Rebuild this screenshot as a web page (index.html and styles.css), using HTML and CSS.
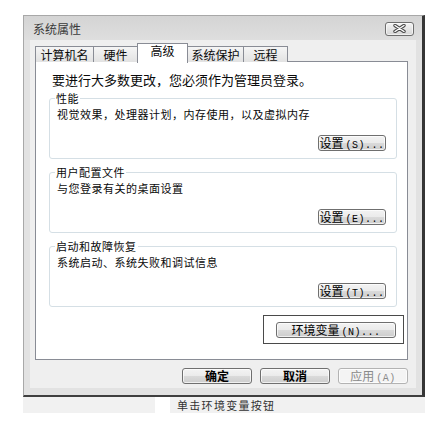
FILE: index.html
```html
<!DOCTYPE html>
<html lang="zh-CN">
<head>
    <meta charset="UTF-8"/>
    <title>系统属性</title>
    <link rel="stylesheet" href="styles.css">
</head>
<body>

<div class="window">
    <div class="titlebar">
        <span class="title">系统属性</span>
        <button class="close-btn" aria-label="关闭">
            <svg width="13" height="9" viewBox="0 0 13 9">
                <path d="M2 1.5 L11 7.5 M11 1.5 L2 7.5" stroke="#4a4a4a" stroke-width="3.4" stroke-linecap="round"/>
                <path d="M2 1.5 L11 7.5 M11 1.5 L2 7.5" stroke="#ffffff" stroke-width="1.4" stroke-linecap="round"/>
            </svg>
        </button>
    </div>

    <div class="client">
        <div class="tabs">
            <div class="tab">计算机名</div>
            <div class="tab">硬件</div>
            <div class="tab active">高级</div>
            <div class="tab">系统保护</div>
            <div class="tab">远程</div>
        </div>

        <div class="tab-panel">
            <p class="notice">要进行大多数更改，您必须作为管理员登录。</p>

            <fieldset class="group">
                <legend>性能</legend>
                <p>视觉效果，处理器计划，内存使用，以及虚拟内存</p>
                <div class="group-actions">
                    <button class="btn btn-settings">设置<span class="hotkey">(S)...</span></button>
                </div>
            </fieldset>

            <fieldset class="group">
                <legend>用户配置文件</legend>
                <p>与您登录有关的桌面设置</p>
                <div class="group-actions">
                    <button class="btn btn-settings">设置<span class="hotkey">(E)...</span></button>
                </div>
            </fieldset>

            <fieldset class="group">
                <legend>启动和故障恢复</legend>
                <p>系统启动、系统失败和调试信息</p>
                <div class="group-actions">
                    <button class="btn btn-settings">设置<span class="hotkey">(T)...</span></button>
                </div>
            </fieldset>

            <div class="env-row">
                <div class="env-highlight">
                    <button class="btn btn-env">环境变量<span class="hotkey">(N)...</span></button>
                </div>
            </div>
        </div>

        <div class="dialog-buttons">
            <button class="btn btn-dialog btn-strong">确定</button>
            <button class="btn btn-dialog btn-strong">取消</button>
            <button class="btn btn-dialog" disabled>应用<span class="hotkey">(A)</span></button>
        </div>
    </div>
</div>

<div class="caption-strip">
    <span class="caption-blank"></span>
    <span class="caption">单击环境变量按钮</span>
</div>

</body>
</html>
```

FILE: styles.css
```css
:root {
    --frame-color: #e2e2e2;
    --client-color: #efefef;
    --panel-border: #898c95;
    --group-border: #d5dfe5;
    --text-color: #0a0a0a;
}

* {
    margin: 0;
    padding: 0;
    box-sizing: border-box;
}

body {
    font-family: "Noto Sans CJK SC", sans-serif;
    font-size: 12px;
    color: var(--text-color);
    background-color: #fff;
}

/* window frame */

.window {
    margin: 15px 0 0 23px;
    width: 402px;
    height: 382px;
    display: flex;
    flex-direction: column;
    padding: 0 6px 7px 6px;
    background-color: var(--frame-color);
    border: 1px solid #a8a8a8;
    border-right: 3px solid #363636;
    border-bottom: 2px solid #3e3e3e;
}

.titlebar {
    height: 24px;
    flex: none;
    display: flex;
    align-items: center;
    justify-content: space-between;
    margin: 0 -6px;
    padding: 1px 8px 0 9px;
    background: linear-gradient(#d4d4d4, #dedede);
}

.title {
    line-height: 14px;
    color: #3a3a3a;
}

.close-btn {
    width: 29px;
    height: 14px;
    display: flex;
    align-items: center;
    justify-content: center;
    border: 1px solid #6e6e6e;
    border-radius: 3px;
    background: linear-gradient(#f4f4f4, #d6d6d6);
    box-shadow: inset 0 0 0 1px rgba(255, 255, 255, 0.6);
}

.client {
    flex: 1;
    display: flex;
    flex-direction: column;
    padding: 3px 8px 4px 5px;
    background-color: var(--client-color);
}

/* tabs */

.tabs {
    display: flex;
    align-items: flex-end;
    height: 19px;
    position: relative;
    z-index: 1;
}

.tab {
    height: 16px;
    line-height: 15px;
    text-align: center;
    margin-right: -1px;
    border: 1px solid var(--panel-border);
    border-bottom: none;
    background: linear-gradient(#f5f5f5, #e2e2e2);
}

.tab:nth-child(1) { width: 59px; }
.tab:nth-child(2) { width: 45px; }
.tab:nth-child(3) { width: 51px; }
.tab:nth-child(4) { width: 57px; }
.tab:nth-child(5) { width: 45px; }

.tab.active {
    height: 20px;
    line-height: 14px;
    margin-bottom: -1px;
    background: #fff;
    position: relative;
}

.tab-panel {
    margin-top: -1px;
    display: flex;
    flex-direction: column;
    padding: 10px 3px 15px 13px;
    background-color: #fff;
    border: 1px solid var(--panel-border);
}

.notice {
    font-size: 13px;
    line-height: 16px;
    padding-left: 3px;
}

/* group boxes */

.group {
    margin: 5px 7px 0 0;
    padding: 0 10px 7px 7px;
    border: 1px solid var(--group-border);
    border-radius: 3px;
    font-size: 11px;
    letter-spacing: 0.5px;
}

.notice + .group {
    margin-top: 2px;
}

.group legend {
    line-height: 16px;
    padding: 0 1px;
    margin-left: -2px;
}

.group p {
    line-height: 16px;
}

.group-actions {
    display: flex;
    justify-content: flex-end;
    margin-top: 13px;
    letter-spacing: 0;
}

/* buttons */

.btn {
    font-family: inherit;
    font-size: 12px;
    line-height: 14px;
    color: #000;
    height: 16px;
    border: 1px solid #6f6f6f;
    border-radius: 3px;
    background: linear-gradient(#f3f3f3 0%, #ebebeb 48%, #dadada 52%, #cdcdcd 100%);
    box-shadow: inset 0 0 0 1px rgba(255, 255, 255, 0.7);
    cursor: pointer;
}

.btn:disabled {
    color: #8a8a8a;
    border-color: #b3b3b3;
    background: #f4f4f4;
    cursor: default;
}

.hotkey {
    font-family: "Liberation Mono", monospace;
    font-size: 10px;
    letter-spacing: 0.5px;
    margin-left: 2px;
}

.btn-settings {
    width: 68px;
}

.env-row {
    display: flex;
    justify-content: flex-end;
    margin-top: 8px;
}

.env-highlight {
    padding: 5px 7px 5px 12px;
    border: 1px solid #4a4a4a;
}

.btn-env {
    width: 120px;
}

.dialog-buttons {
    display: flex;
    justify-content: flex-end;
    gap: 8px;
    margin-top: 8px;
}

.btn-dialog {
    width: 70px;
}

.btn-strong {
    font-weight: bold;
}

/* caption under the screenshot */

.caption-strip {
    margin-left: 23px;
    width: 402px;
    height: 16px;
    display: flex;
    align-items: center;
    background-color: #f1f1f1;
}

.caption-blank {
    width: 15px;
    height: 16px;
    margin-left: 132px;
    background-color: #fff;
}

.caption {
    margin-left: 7px;
    font-size: 11px;
    letter-spacing: 1.3px;
    color: #333;
    line-height: 16px;
}
```
